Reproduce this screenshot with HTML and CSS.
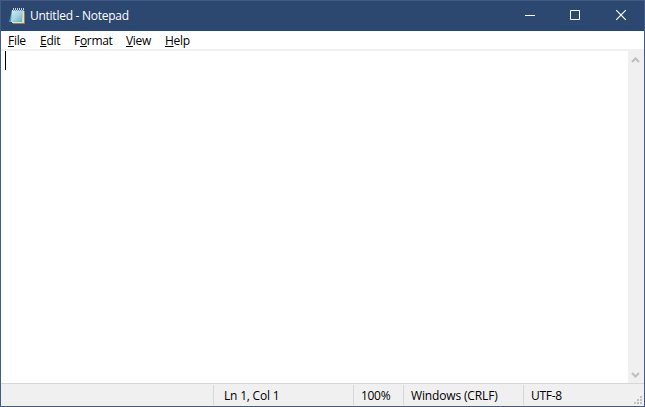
FILE: index.html
```html
<!DOCTYPE html>
<html lang="en">
<head>
<meta charset="utf-8">
<title>Untitled - Notepad</title>
<link rel="stylesheet" href="styles.css">
</head>
<body>
<div class="window">
  <header class="titlebar">
    <svg class="app-icon" width="18" height="18" viewBox="0 0 18 18">
      <defs><linearGradient id="paper" x1="0" y1="0" x2="1" y2="1"><stop offset="0" stop-color="#d5f0f5"/><stop offset=".5" stop-color="#a5d5e0"/><stop offset="1" stop-color="#65a8b8"/></linearGradient></defs>
      <path d="M4 3 1 15h3z" fill="#5796b0"/>
      <path d="M4 3h12v13H4z" fill="#e6dfbd"/>
      <path d="M4 3h11L14 15H3z" fill="url(#paper)"/>
      <path d="M16.5 4v12.5H5" fill="none" stroke="#b99a60" stroke-width=".7"/>
      <path d="M5.5 1v2M7.5 1v2M9.5 1v2M11.5 1v2M13.5 1v2M15.5 1v2" stroke="#c5d0da"/>
      <path d="M5 3.5h12" stroke="#718c9a" stroke-dasharray="1 1"/>
    </svg>
    <span class="title">Untitled - Notepad</span>
    <div class="controls">
      <svg width="46" height="30" viewBox="0 0 46 30"><path d="M19 14.5h10" stroke="#fff"/></svg>
      <svg width="46" height="30" viewBox="0 0 46 30"><path d="M18.5 9.5h9v9h-9z" fill="none" stroke="#fff"/></svg>
      <svg width="46" height="30" viewBox="0 0 46 30"><path d="M18.2 9.2l9.6 9.6M27.8 9.2l-9.6 9.6" stroke="#fff" stroke-width="1.2"/></svg>
    </div>
  </header>
  <nav class="menu">
    <span><u>F</u>ile</span>
    <span><u>E</u>dit</span>
    <span>F<u>o</u>rmat</span>
    <span><u>V</u>iew</span>
    <span><u>H</u>elp</span>
  </nav>
  <main class="editor">
    <div class="page"><div class="caret"></div></div>
    <div class="scrollbar">
      <svg width="16" height="17" viewBox="0 0 16 17"><path d="M4 11 7.5 7.5 11 11" fill="none" stroke="#bfbfbf" stroke-width="2"/></svg>
      <svg width="16" height="17" viewBox="0 0 16 17"><path d="M4 7 7.5 10.5 11 7" fill="none" stroke="#bfbfbf" stroke-width="2"/></svg>
    </div>
  </main>
  <footer class="status">
    <span></span>
    <span class="position">Ln 1, Col 1</span>
    <span>100%</span>
    <span class="ending">Windows (CRLF)</span>
    <span>UTF-8</span>
    <svg class="grip" width="8" height="8" viewBox="0 0 8 8" fill="#bfbfbf"><path d="M6 0h2v2H6zM3 3h2v2H3zM6 3h2v2H6zM0 6h2v2H0zM3 6h2v2H3zM6 6h2v2H6z"/></svg>
  </footer>
</div>
</body>
</html>
```
FILE: styles.css
```css
* { box-sizing: border-box; }
body { margin: 0; font: 12px/16px "Open Sans", "Noto Sans", sans-serif; color: #000; }
.window { width: 645px; height: 407px; border: 1px solid #425b86; background: #fff; display: grid; grid-template-rows: 30px 18px minmax(0, 1fr) 23px; }
.titlebar { background: #2c4770; color: #fff; display: flex; align-items: center; padding-left: 7px; }
.app-icon { flex: none; margin-right: 4px; }
.title { white-space: nowrap; letter-spacing: -.26px; }
.controls { display: flex; margin-left: auto; }
.menu { display: grid; grid-template-columns: 32px 34px 52px 39px 40px; padding: 2px 0 0 7px; white-space: nowrap; letter-spacing: -.3px; }
.menu u { text-underline-offset: 1px; text-decoration-thickness: 1px; text-decoration-skip-ink: none; }
.editor { display: grid; grid-template-columns: 1fr 16px; border-top: 2px solid #f0f0f0; }
.page { padding: 0 0 0 4px; }
.caret { width: 1px; height: 19px; background: #000; }
.scrollbar { background: #f0f0f0; display: flex; flex-direction: column; justify-content: space-between; }
.status { background: #f0f0f0; border-top: 1px solid #d7d7d7; display: grid; grid-template-columns: 212px 140px 50px 120px 1fr 10px; white-space: nowrap; letter-spacing: -.3px; }
.status span { margin-top: 1px; padding-top: 3px; height: 20px; }
.status span + span { border-left: 1px solid #d7d7d7; padding-left: 7px; }
.status .position { padding-left: 10px; letter-spacing: -.2px; }
.status .ending { letter-spacing: -.15px; }
.grip { align-self: end; margin-bottom: 2px; }
```
